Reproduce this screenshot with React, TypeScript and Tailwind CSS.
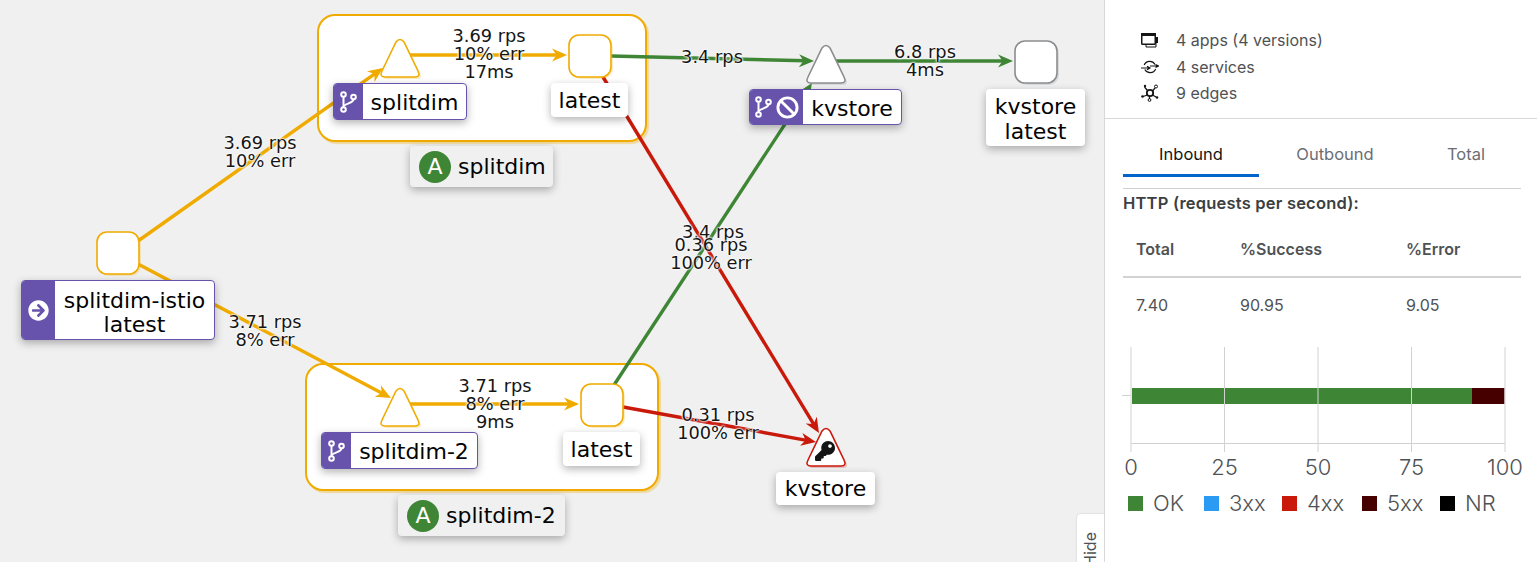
import React from "react";
import { Ban } from "lucide-react";
import { FaArrowCircleRight, FaKey } from "react-icons/fa";

const AMBER = "#f0ab00";
const GREEN = "#3e8635";
const RED = "#c9190b";
const GRAY = "#8a8d90";

function Edge({ from, to, color }: { from: number[]; to: number[]; color: string }) {
  const rad = Math.atan2(to[1] - from[1], to[0] - from[0]);
  const deg = (rad * 180) / Math.PI;
  const endX = to[0] - Math.cos(rad) * 8;
  const endY = to[1] - Math.sin(rad) * 8;
  return (
    <g>
      <line x1={from[0]} y1={from[1]} x2={endX} y2={endY} stroke={color} strokeWidth={3.4} />
      <path transform={`translate(${to[0]} ${to[1]}) rotate(${deg})`} d="M0 0 L-15 -6.5 L-10.5 0 L-15 6.5Z" fill={color} />
    </g>
  );
}

function SquareNode({ x, y, color }: { x: number; y: number; color: string }) {
  return (
    <g>
      <rect x={x + 2} y={y + 2} width={42} height={42} rx={10} fill={color} opacity={0.22} />
      <rect x={x} y={y} width={42} height={42} rx={10} fill="#fff" stroke={color} strokeWidth={1.6} />
    </g>
  );
}

function TriangleNode({ x, y, color }: { x: number; y: number; color: string }) {
  const d = `M${x - 4} ${y + 3} Q${x} ${y - 2} ${x + 4} ${y + 3} L${x + 18} ${y + 32} Q${x + 21} ${y + 38} ${x + 15} ${y + 38} L${x - 15} ${y + 38} Q${x - 21} ${y + 38} ${x - 18} ${y + 32} Z`;
  return (
    <g>
      <path d={d} transform="translate(2 2)" fill={color} opacity={0.22} />
      <path d={d} fill="#fff" stroke={color} strokeWidth={1.6} />
    </g>
  );
}

function BranchIcon() {
  return (
    <svg width={17} height={22} viewBox="0 0 17 22" fill="none" stroke="#fff" strokeWidth={2}>
      <circle cx={3.5} cy={3.5} r={2.3} />
      <circle cx={3.5} cy={18.5} r={2.3} />
      <circle cx={13.5} cy={6} r={2.3} />
      <path d="M3.5 6V16" />
      <path d="M13.5 8.3C13.5 12 7 12 3.5 15" />
    </svg>
  );
}

function NodeLabel({ className, children }: { className: string; children: React.ReactNode }) {
  return (
    <div className={`absolute flex rounded-[4px] bg-white text-center text-[22px] text-[#030303] shadow-[0_3px_8px_rgba(3,3,3,0.3)] ${className}`}>
      {children}
    </div>
  );
}

function Badge({ className, iconWidth, bodyClass, icons, children }: { className: string; iconWidth: string; bodyClass: string; icons: React.ReactNode; children: React.ReactNode }) {
  return (
    <NodeLabel className={`overflow-hidden border border-[#6753ac] leading-[24px] ${className}`}>
      <div className={`flex shrink-0 items-center justify-center gap-[4px] bg-[#6753ac] text-white ${iconWidth}`}>{icons}</div>
      <div className={`flex flex-1 items-center justify-center ${bodyClass}`}>{children}</div>
    </NodeLabel>
  );
}

function GroupLabel({ className, children }: { className: string; children: React.ReactNode }) {
  return (
    <div className={`absolute flex items-center gap-[7px] rounded-[4px] bg-[#f0f0f0] pl-[9px] text-[22px] text-[#030303] shadow-[0_3px_8px_rgba(3,3,3,0.3)] ${className}`}>
      <span className="flex h-[32px] w-[32px] items-center justify-center rounded-full bg-[#3e8635] text-white">A</span>
      {children}
    </div>
  );
}

function EdgeLabel({ className, lines }: { className: string; lines: string[] }) {
  return (
    <div className={`absolute -translate-x-1/2 whitespace-nowrap text-center text-[17.8px] leading-[18px] text-[#151515] [text-shadow:0_0_3px_#fff,0_0_2px_#fff,0_0_2px_#fff,0_0_1px_#fff] ${className}`}>
      {lines.map((line) => (
        <div key={line}>{line}</div>
      ))}
    </div>
  );
}

function Graph() {
  return (
    <div className="relative h-full flex-1 overflow-hidden bg-[#f0f0f0] font-['DejaVu_Sans',sans-serif]">
      <div className="absolute left-[317px] top-[14px] h-[128px] w-[330px] rounded-[18px] border-2 border-[#f0ab00] bg-white shadow-[2px_2px_1px_rgba(240,171,0,0.35)]" />
      <div className="absolute left-[305px] top-[363px] h-[128px] w-[354px] rounded-[18px] border-2 border-[#f0ab00] bg-white shadow-[2px_2px_1px_rgba(240,171,0,0.35)]" />

      <svg className="absolute left-0 top-0" width={1104} height={562}>
        <Edge from={[138, 241]} to={[383, 68]} color={AMBER} />
        <Edge from={[138, 264]} to={[391, 398]} color={AMBER} />
        <Edge from={[410, 55]} to={[567, 55]} color={AMBER} />
        <Edge from={[410, 404]} to={[579, 404]} color={AMBER} />
        <Edge from={[611, 56]} to={[814, 61]} color={GREEN} />
        <Edge from={[836, 61]} to={[1013, 61]} color={GREEN} />
        <Edge from={[614, 385]} to={[812, 83]} color={GREEN} />
        <Edge from={[603, 77]} to={[819, 433]} color={RED} />
        <Edge from={[623, 407]} to={[816, 442]} color={RED} />
        <SquareNode x={97} y={232} color={AMBER} />
        <SquareNode x={569} y={35} color={AMBER} />
        <SquareNode x={581} y={384} color={AMBER} />
        <SquareNode x={1015} y={41} color={GRAY} />
        <TriangleNode x={400} y={39} color={AMBER} />
        <TriangleNode x={400} y={388} color={AMBER} />
        <TriangleNode x={826} y={45} color={GRAY} />
        <TriangleNode x={826} y={428} color={RED} />
      </svg>
      <FaKey className="absolute left-[815px] top-[441px] text-[#151515]" size={20} />

      <Badge className="left-[21px] top-[280px] h-[60px] w-[194px]" iconWidth="w-[33px]" bodyClass="pt-[6px]" icons={<FaArrowCircleRight size={21} />}>
        <span>
          splitdim-istio
          <br />
          latest
        </span>
      </Badge>
      <Badge className="left-[333px] top-[83px] h-[37px] w-[134px]" iconWidth="w-[29px]" bodyClass="pt-[2px]" icons={<BranchIcon />}>
        splitdim
      </Badge>
      <Badge className="left-[321px] top-[432px] h-[37px] w-[157px]" iconWidth="w-[29px]" bodyClass="pt-[2px]" icons={<BranchIcon />}>
        splitdim-2
      </Badge>
      <Badge
        className="left-[749px] top-[89px] h-[36px] w-[153px]"
        iconWidth="w-[53px]"
        bodyClass="pt-[4px]"
        icons={
          <>
            <BranchIcon />
            <Ban size={23} strokeWidth={3} />
          </>
        }
      >
        kvstore
      </Badge>

      <NodeLabel className="left-[551px] top-[83px] h-[34px] w-[77px] items-center justify-center">latest</NodeLabel>
      <NodeLabel className="left-[563px] top-[432px] h-[34px] w-[77px] items-center justify-center">latest</NodeLabel>
      <NodeLabel className="left-[776px] top-[472px] h-[33px] w-[99px] items-center justify-center">kvstore</NodeLabel>
      <NodeLabel className="left-[986px] top-[89px] h-[57px] w-[99px] items-center justify-center pt-[3px] leading-[25px]">
        <span>
          kvstore
          <br />
          latest
        </span>
      </NodeLabel>

      <GroupLabel className="left-[410px] top-[146px] h-[41px] w-[143px]">splitdim</GroupLabel>
      <GroupLabel className="left-[398px] top-[495px] h-[41px] w-[167px]">splitdim-2</GroupLabel>

      <EdgeLabel className="left-[260px] top-[134px]" lines={["3.69 rps", "10% err"]} />
      <EdgeLabel className="left-[489px] top-[27px]" lines={["3.69 rps", "10% err", "17ms"]} />
      <EdgeLabel className="left-[265px] top-[313px]" lines={["3.71 rps", "8% err"]} />
      <EdgeLabel className="left-[495px] top-[377px]" lines={["3.71 rps", "8% err", "9ms"]} />
      <EdgeLabel className="left-[712px] top-[48px]" lines={["3.4 rps"]} />
      <EdgeLabel className="left-[925px] top-[43px]" lines={["6.8 rps", "4ms"]} />
      <EdgeLabel className="left-[713px] top-[223px]" lines={["3.4 rps"]} />
      <EdgeLabel className="left-[711px] top-[236px]" lines={["0.36 rps", "100% err"]} />
      <EdgeLabel className="left-[718px] top-[406px]" lines={["0.31 rps", "100% err"]} />

      <div className="absolute left-[1077px] top-[514px] flex h-[60px] w-[28px] items-start justify-center rounded-tl-[4px] bg-white pr-[2px] pt-[18px] shadow-[0_0_2px_rgba(3,3,3,0.2)]">
        <span className="rotate-180 font-['Inter',sans-serif] text-[16px] leading-[26px] text-[#4f5255] [writing-mode:vertical-rl]">Hide</span>
      </div>
    </div>
  );
}

function AppsIcon() {
  return (
    <svg width={18} height={16} viewBox="0 0 18 16" fill="none" stroke="#151515">
      <path d="M15 6V15H5V13" strokeWidth={1} />
      <rect x={0.75} y={1.75} width={13.5} height={10.5} rx={0.8} strokeWidth={1.5} />
      <rect x={0} y={1} width={15} height={3} fill="#151515" stroke="none" />
      <rect x={15} y={5} width={2} height={6} fill="#151515" stroke="none" />
    </svg>
  );
}

function ServicesIcon() {
  return (
    <svg width={18} height={14} viewBox="0 0 18 14" fill="none" stroke="#151515" strokeWidth={1.2}>
      <path d="M3.2 5A6 6 0 0 1 14 4.5" />
      <path d="M14.6 9A6 6 0 0 1 3.8 9.5" />
      <path d="M0 8H9M6 6.2L9 8L6 9.8" />
      <path d="M9 6H17.5M14.5 4.5L17.5 6L14.5 7.5" />
    </svg>
  );
}

function EdgesIcon() {
  return (
    <svg width={18} height={18} viewBox="0 0 18 18" fill="none" stroke="#151515">
      <circle cx={9} cy={9} r={3.2} strokeWidth={1.8} />
      <path d="M6.5 6.5L3.5 3M11.5 7L14 4M6.5 11L2 12.5M11.5 11L15 13M8.5 12V15" strokeWidth={1.2} />
      <circle cx={4} cy={2} r={1.2} fill="#151515" stroke="none" />
      <circle cx={15} cy={2.5} r={1.5} strokeWidth={1} />
      <circle cx={1.5} cy={12.5} r={1.3} fill="#151515" stroke="none" />
      <circle cx={16} cy={13.5} r={1.3} fill="#151515" stroke="none" />
      <circle cx={8.5} cy={16} r={1.4} strokeWidth={1} />
    </svg>
  );
}

function StatRow({ icon, text }: { icon: React.ReactNode; text: string }) {
  return (
    <div className="flex h-[26.5px] items-center">
      <span className="flex w-[35px] items-center">{icon}</span>
      {text}
    </div>
  );
}

function BarChart() {
  const ticks = [
    { x: 1131, label: "0" },
    { x: 1224.5, label: "25" },
    { x: 1318, label: "50" },
    { x: 1411.5, label: "75" },
    { x: 1505, label: "100" },
  ];
  return (
    <svg className="mt-[8px] block" width={432} height={140} viewBox="1105 340 432 140">
      <rect x={1132} y={388} width={340} height={16} fill="#3e8635" />
      <rect x={1472} y={388} width={32.5} height={16} fill="#470000" />
      <line x1={1122} y1={395.5} x2={1131} y2={395.5} stroke="#d2d2d2" />
      <line x1={1131} y1={443.5} x2={1505} y2={443.5} stroke="#d2d2d2" />
      {ticks.map((tick) => (
        <g key={tick.label}>
          <line x1={tick.x} y1={347} x2={tick.x} y2={452} stroke="#d2d2d2" />
          <text x={tick.x} y={475} textAnchor="middle" fontSize={22} fontWeight={300} fill="#4f5255">
            {tick.label}
          </text>
        </g>
      ))}
    </svg>
  );
}

function LegendItem({ className, color, label }: { className: string; color: string; label: string }) {
  return (
    <div className={`flex items-center gap-[10px] ${className}`}>
      <span className={`h-[15px] w-[15px] ${color}`} />
      {label}
    </div>
  );
}

function SidePanel() {
  return (
    <aside className="h-full w-[433px] shrink-0 border-l border-[#d8d8d8] bg-white font-['Inter',sans-serif] text-[#4f5255]">
      <div className="h-[119px] border-b border-[#d8d8d8] pl-[36px] pt-[27px] text-[16px]">
        <StatRow icon={<AppsIcon />} text="4 apps (4 versions)" />
        <StatRow icon={<ServicesIcon />} text="4 services" />
        <StatRow icon={<EdgesIcon />} text="9 edges" />
      </div>

      <div className="ml-[18px] w-[398px]">
        <div className="flex border-b border-[#d2d2d2] pb-[11px] pt-[15px] text-[16.5px] text-[#6a6e73]">
          <div className="flex h-[43px] w-[136px] items-center justify-center border-b-[3px] border-[#0066cc] text-[#151515]">Inbound</div>
          <div className="flex h-[43px] w-[152px] items-center justify-center pb-[3px]">Outbound</div>
          <div className="flex h-[43px] w-[110px] items-center justify-center pb-[3px]">Total</div>
        </div>
        <div className="mt-[4px] text-[16.5px] font-semibold leading-[20px] tracking-[0.2px] text-[#3c3f42]">HTTP (requests per second):</div>
        <table className="w-full table-fixed text-left text-[16px]">
          <thead>
            <tr className="border-b-2 border-[#d2d2d2] font-semibold">
              <th className="h-[64px] w-[117px] pl-[13px] pt-[8px] font-semibold">Total</th>
              <th className="h-[64px] w-[166px] pt-[8px] font-semibold">%Success</th>
              <th className="h-[64px] pt-[8px] font-semibold">%Error</th>
            </tr>
          </thead>
          <tbody>
            <tr className="text-[16px]">
              <td className="h-[55px] pl-[13px]">7.40</td>
              <td className="h-[55px]">90.95</td>
              <td className="h-[55px]">9.05</td>
            </tr>
          </tbody>
        </table>
      </div>

      <BarChart />
      <div className="ml-[23px] mt-[16px] flex text-[22px] font-light leading-[15px]">
        <LegendItem className="w-[76px]" color="bg-[#3e8635]" label="OK" />
        <LegendItem className="w-[78px]" color="bg-[#2b9af3]" label="3xx" />
        <LegendItem className="w-[80px]" color="bg-[#c9190b]" label="4xx" />
        <LegendItem className="w-[78px]" color="bg-[#470000]" label="5xx" />
        <LegendItem className="w-[70px]" color="bg-black" label="NR" />
      </div>
    </aside>
  );
}

export default function App() {
  return (
    <div className="flex h-[562px] w-full overflow-hidden">
      <Graph />
      <SidePanel />
    </div>
  );
}
